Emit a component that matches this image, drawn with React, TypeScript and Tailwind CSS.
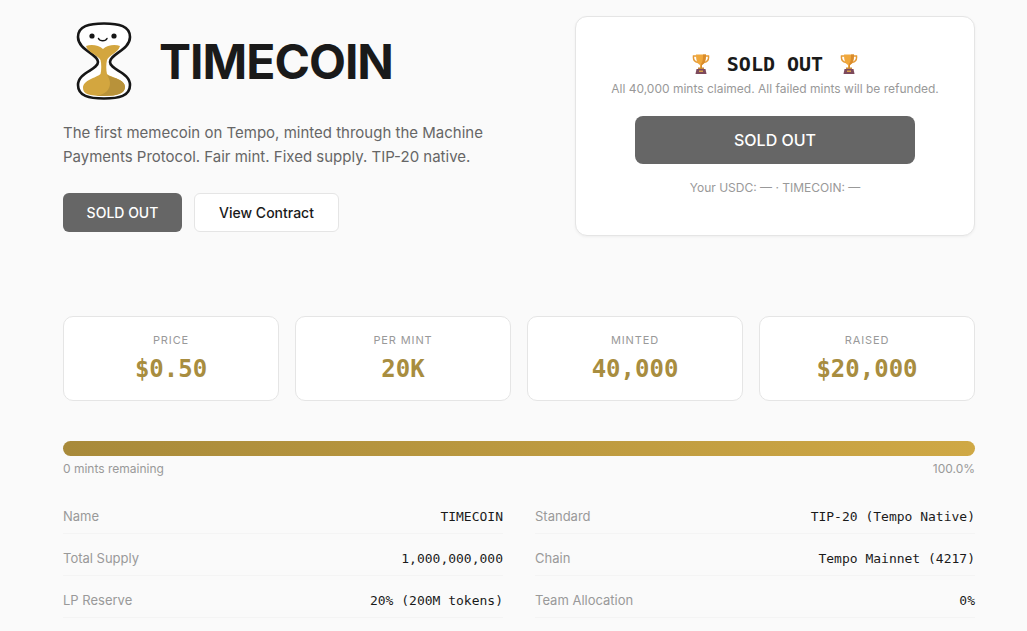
const mono = "font-['DejaVu_Sans_Mono','Liberation_Mono',monospace]";

const Logo = () => (
  <svg width="56" height="78" viewBox="0 0 56 78" fill="none" className="shrink-0">
    <path
      d="M28 1.5 C43 1.5 54 4 54 15 C54 28 34 32 34 40 C34 48 54 50 54 63 C54 74 43 76.5 28 76.5 C13 76.5 2 74 2 63 C2 50 22 48 22 40 C22 32 2 28 2 15 C2 4 13 1.5 28 1.5 Z"
      fill="#fff"
      stroke="#161616"
      strokeWidth="2.6"
    />
    <path
      d="M10 24 C15 22 23 23 27 27 C31 23 39 22 44 24 C42 31 33 33 31 38 C30 42 30 48 31 52 C36 56 49 57 49 65 C49 71 42 74 28 74 C13 74 7 72 7 66 C7 58 20 56 24.5 52 C25.5 48 25.5 42 24.5 38 C22 33 12 31 10 24 Z"
      fill="#d3a63f"
    />
    <path
      d="M31 53 C36 56 49 57 49 65 C49 71 42 74 28 74 C25 74 22 74 20 73.5 C32 73 38 63 31 53 Z"
      fill="#b8923a"
    />
    <circle cx="16" cy="14" r="2.6" fill="#161616" />
    <circle cx="38" cy="14" r="2.6" fill="#161616" />
    <path d="M22.5 16.5 C24 19.5 29.5 19.5 31 16.5" stroke="#161616" strokeWidth="1.5" strokeLinecap="round" />
  </svg>
);

const Trophy = () => (
  <svg width="18" height="20" viewBox="0 0 18 20" fill="none" className="shrink-0">
    <path d="M4.5 2 H1.5 C1 6 3 8 6 8.5 M13.5 2 H16.5 C17 6 15 8 12 8.5" stroke="#e59a35" strokeWidth="1.5" />
    <path d="M4 0.5 H14 C14 6 13 9.5 10 11 V14 H8 V11 C5 9.5 4 6 4 0.5 Z" fill="#f0a83c" />
    <path d="M11 0.5 H14 C14 6 13 9.5 10 11 V14 H9 V10 C11 8 11 4 11 0.5 Z" fill="#d98b2b" />
    <rect x="6" y="13.5" width="6" height="1.5" fill="#c98a3a" />
    <path d="M4.5 15 H13.5 L14.5 20 H3.5 Z" fill="#7d4a5c" />
    <rect x="7" y="16.5" width="4" height="1.5" fill="#d9a24a" />
  </svg>
);

const stats = [
  { label: "PRICE", value: "$0.50" },
  { label: "PER MINT", value: "20K" },
  { label: "MINTED", value: "40,000" },
  { label: "RAISED", value: "$20,000" },
];

const rows = [
  ["Name", "TIMECOIN", "Standard", "TIP-20 (Tempo Native)"],
  ["Total Supply", "1,000,000,000", "Chain", "Tempo Mainnet (4217)"],
  ["LP Reserve", "20% (200M tokens)", "Team Allocation", "0%"],
];

const Row = ({ label, value }: { label: string; value: string }) => (
  <div className="flex items-center justify-between h-[42px] pt-[8px] border-b border-[#f4f4f4]">
    <span className="text-[13px] text-[#999]">{label}</span>
    <span className={`${mono} text-[13px] text-[#1a1a1a]`}>{value}</span>
  </div>
);

export default function App() {
  return (
    <div className="h-[631px] overflow-hidden bg-[#fafafa] font-['Inter',sans-serif] text-[#1a1a1a]">
      <div className="ml-[63px] w-[912px]">
        <div className="flex justify-between pt-4">
          <div className="w-[460px]">
            <div className="flex items-center gap-[27px] pl-[13px] pt-[6px]">
              <Logo />
              <h1 className="pt-[2px] text-[48px] leading-[58px] font-bold tracking-[-1px] text-[#1a1a1a]">TIMECOIN</h1>
            </div>
            <p className="mt-[21px] text-[15px] leading-[24px] text-[#666]">
              The first memecoin on Tempo, minted through the Machine
              <br />
              Payments Protocol. Fair mint. Fixed supply. TIP-20 native.
            </p>
            <div className="mt-[24px] flex gap-3">
              <button className="h-[39px] w-[119px] rounded-md bg-[#666] text-[14px] font-medium text-white">SOLD OUT</button>
              <button className="h-[39px] w-[145px] rounded-md border border-[#e5e5e5] bg-white text-[14px] font-medium text-[#1a1a1a]">View Contract</button>
            </div>
          </div>
          <div className="flex h-[220px] w-[400px] flex-col items-center rounded-xl border border-[#e5e5e5] bg-white pt-[34px] shadow-[0_1px_3px_rgba(0,0,0,0.05)]">
            <div className={`${mono} flex h-[26px] items-center gap-[17px] text-[20px] leading-[26px] font-bold whitespace-pre text-[#1a1a1a]`}>
              <Trophy />
              <span>SOLD OUT</span>
              <Trophy />
            </div>
            <p className="mt-[3px] text-[12px] leading-[18px] text-[#999]">All 40,000 mints claimed. All failed mints will be refunded.</p>
            <button className="mt-[18px] h-[48px] w-[280px] rounded-lg bg-[#666] text-[16px] font-medium text-white">SOLD OUT</button>
            <p className="mt-[15px] text-[12px] leading-[18px] text-[#999]">Your USDC: — · TIMECOIN: —</p>
          </div>
        </div>

        <div className="mt-[80px] grid grid-cols-4 gap-4">
          {stats.map(s => (
            <div key={s.label} className="flex h-[85px] flex-col items-center rounded-[10px] border border-[#e5e5e5] bg-white pt-[15px]">
              <div className="text-[11px] leading-[16px] tracking-[0.88px] text-[#999]">{s.label}</div>
              <div className={`${mono} mt-[5px] text-[24px] leading-[32px] font-bold text-[#a88d3f]`}>{s.value}</div>
            </div>
          ))}
        </div>

        <div className="mt-[40px] h-[15px] rounded-full bg-gradient-to-r from-[#a88a3a] to-[#cfa845]" />
        <div className="mt-[4px] flex justify-between text-[12px] leading-[18px] text-[#999]">
          <span>0 mints remaining</span>
          <span>100.0%</span>
        </div>

        <div className="mt-[14px] grid grid-cols-2 gap-x-8">
          {rows.map(r => [
            <Row key={r[0]} label={r[0]} value={r[1]} />,
            <Row key={r[2]} label={r[2]} value={r[3]} />,
          ])}
        </div>
      </div>
    </div>
  );
}
